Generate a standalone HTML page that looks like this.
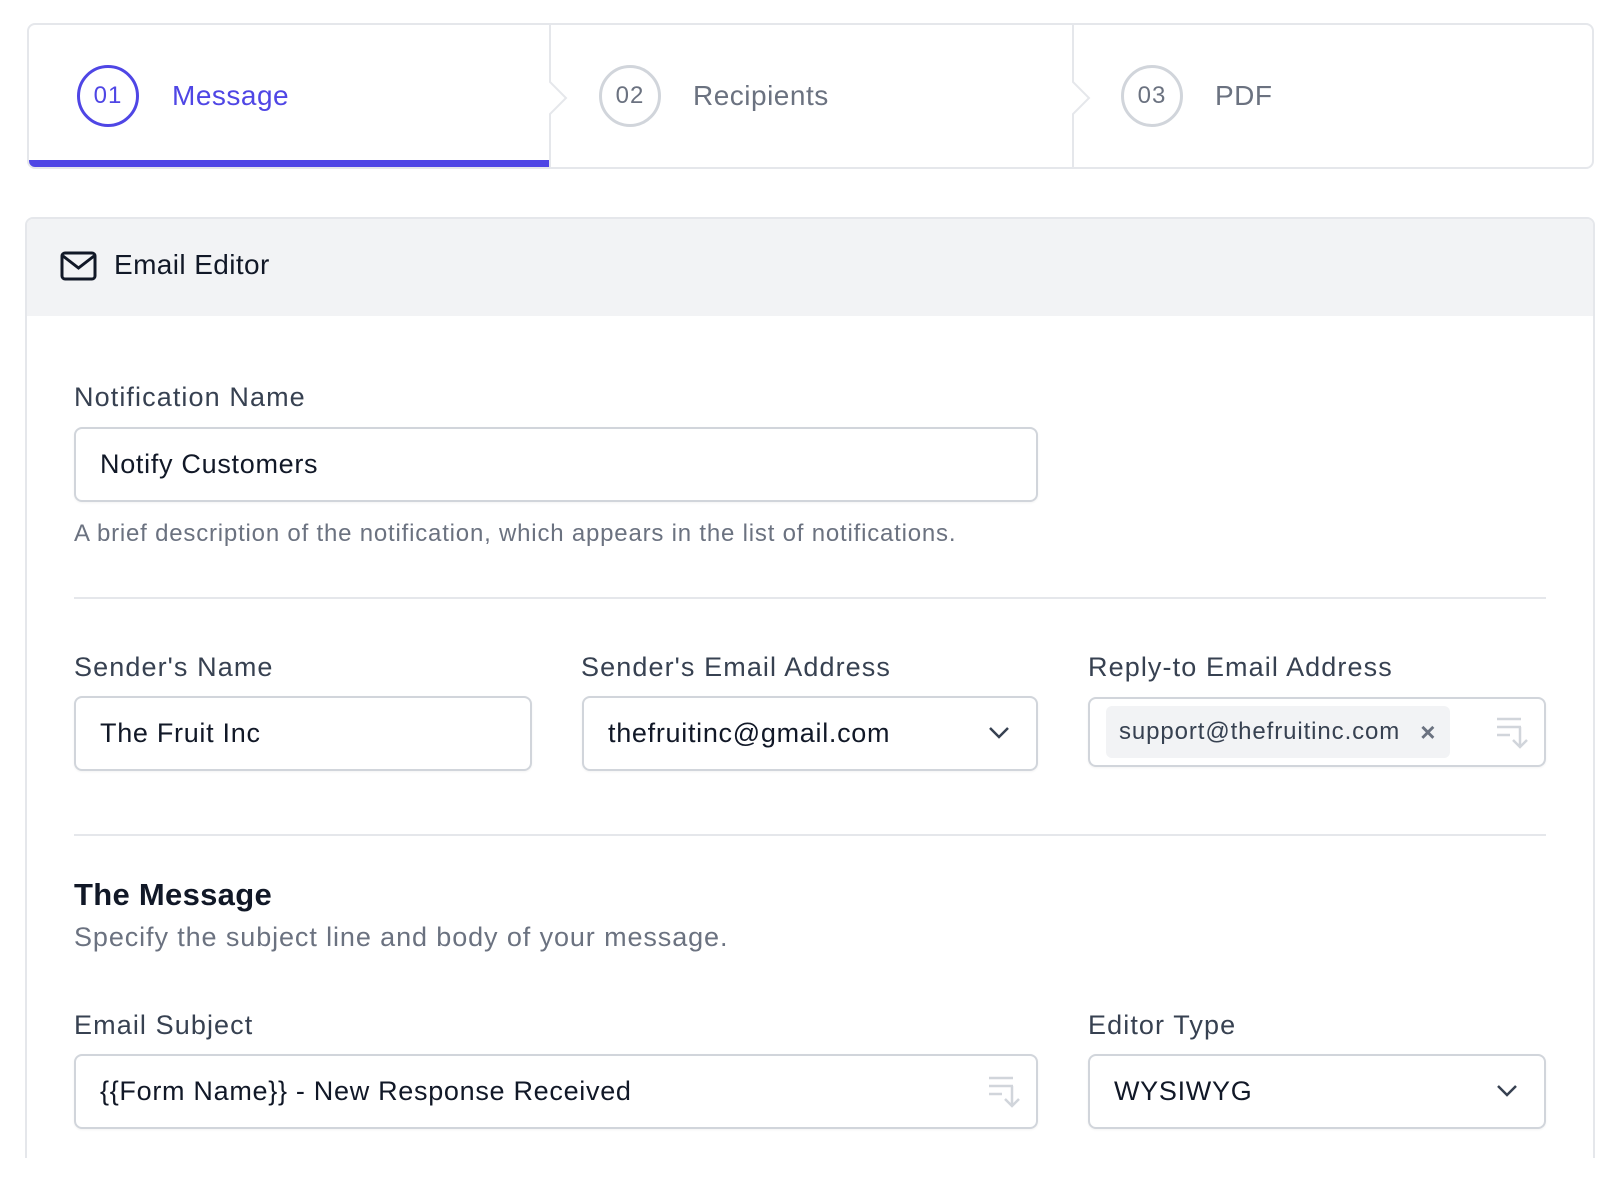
<!DOCTYPE html>
<html><head><meta charset="utf-8"><style>
*{box-sizing:border-box;margin:0;padding:0}
body{width:1620px;height:1180px;background:#fff;font-family:"Liberation Sans",sans-serif;position:relative;overflow:hidden;color:#111827}
.abs{position:absolute}
.steps{left:27px;top:23px;width:1567px;height:146px;border:2px solid #e5e7eb;border-radius:8px;overflow:hidden}
.circ{position:absolute;width:62px;height:62px;border-radius:50%;border:3px solid #d1d5db;color:#6b7280;font-size:24px;display:flex;align-items:center;justify-content:center;top:40px;letter-spacing:1px}
.slabel{position:absolute;top:55px;font-size:28px;color:#6b7280;letter-spacing:0.5px}
.card{left:25px;top:217px;width:1570px;height:941px;border:2px solid #e5e7eb;border-bottom:none;border-radius:8px 8px 0 0;overflow:hidden}
.hdr{position:absolute;left:0;top:0;right:0;height:97px;background:#f2f3f5}
.lbl{position:absolute;font-size:27px;color:#374151;letter-spacing:1.1px}
.inp{position:absolute;border:2px solid #d1d5db;border-radius:8px;height:75px;font-size:27px;color:#111827;padding-left:24px;display:flex;align-items:center;box-shadow:0 1px 2px rgba(0,0,0,.05);letter-spacing:0.7px}
.hr{position:absolute;left:74px;width:1472px;height:2px;background:#e5e7eb}
</style></head><body>
<div class="abs steps">
  <div class="abs" style="left:0;top:135px;width:521px;height:9px;background:#4f46e5"></div>
  <div class="circ" style="left:48px;border-color:#4f46e5;color:#4f46e5">01</div>
  <div class="slabel" style="left:143px;color:#4f46e5">Message</div>
  <svg class="abs" style="left:510px;top:0" width="30" height="146"><path d="M11 0 V57 L27 73 L11 89 V146" fill="none" stroke="#e5e7eb" stroke-width="2"/></svg>
  <div class="circ" style="left:570px">02</div>
  <div class="slabel" style="left:664px">Recipients</div>
  <svg class="abs" style="left:1033px;top:0" width="30" height="146"><path d="M11 0 V57 L27 73 L11 89 V146" fill="none" stroke="#e5e7eb" stroke-width="2"/></svg>
  <div class="circ" style="left:1092px">03</div>
  <div class="slabel" style="left:1186px">PDF</div>
</div>
<div class="abs card">
  <div class="hdr"></div>
</div>
<svg class="abs" style="left:60px;top:251px" width="37" height="30" viewBox="0 0 37 30"><rect x="2" y="2" width="33" height="26" rx="3" fill="none" stroke="#111827" stroke-width="3"/><path d="M3 5 L18.5 17 L34 5" fill="none" stroke="#111827" stroke-width="3"/></svg>
<div class="abs" style="left:114px;top:249px;font-size:28px;color:#111827;letter-spacing:0.4px">Email Editor</div>

<div class="lbl" style="left:74px;top:382px">Notification Name</div>
<div class="inp" style="left:74px;top:427px;width:964px">Notify Customers</div>
<div class="abs" style="left:74px;top:520px;font-size:24px;color:#6b7280;letter-spacing:0.8px">A brief description of the notification, which appears in the list of notifications.</div>
<div class="hr" style="top:597px"></div>

<div class="lbl" style="left:74px;top:652px">Sender's Name</div>
<div class="lbl" style="left:581px;top:652px">Sender's Email Address</div>
<div class="lbl" style="left:1088px;top:652px">Reply-to Email Address</div>
<div class="inp" style="left:74px;top:696px;width:458px">The Fruit Inc</div>
<div class="inp" style="left:582px;top:696px;width:456px">thefruitinc@gmail.com
  <svg class="abs" style="right:26px;top:28px" width="22" height="14"><path d="M2 2 L11 11 L20 2" fill="none" stroke="#374151" stroke-width="2.5"/></svg></div>
<div class="inp" style="left:1088px;top:697px;width:458px;height:70px;padding-left:16px">
  <div style="background:#f2f3f5;border-radius:6px;height:52px;width:344px;font-size:24px;color:#374151;display:flex;align-items:center;padding-left:13px;letter-spacing:0.9px">support@thefruitinc.com<span style="margin-left:20px;color:#6b7280;font-weight:bold;font-size:26px">×</span></div>
  <svg class="abs" style="right:14px;top:18px" width="34" height="34"><path d="M1 2H25M1 10H25M1 18H14M24 10V30M17 23L24 30L31 23" fill="none" stroke="#d1d5db" stroke-width="2.5"/></svg>
</div>
<div class="hr" style="top:834px"></div>

<div class="abs" style="left:74px;top:877px;font-size:31px;font-weight:bold;color:#111827;letter-spacing:0.3px">The Message</div>
<div class="abs" style="left:74px;top:922px;font-size:27px;color:#6b7280;letter-spacing:0.9px">Specify the subject line and body of your message.</div>

<div class="lbl" style="left:74px;top:1010px">Email Subject</div>
<div class="lbl" style="left:1088px;top:1010px">Editor Type</div>
<div class="inp" style="left:74px;top:1054px;width:964px">{{Form Name}} - New Response Received
  <svg class="abs" style="right:14px;top:20px" width="34" height="34"><path d="M1 2H25M1 10H25M1 18H14M24 10V30M17 23L24 30L31 23" fill="none" stroke="#d1d5db" stroke-width="2.5"/></svg></div>
<div class="inp" style="left:1088px;top:1054px;width:458px">WYSIWYG
  <svg class="abs" style="right:26px;top:28px" width="22" height="14"><path d="M2 2 L11 11 L20 2" fill="none" stroke="#374151" stroke-width="2.5"/></svg></div>
</body></html>
